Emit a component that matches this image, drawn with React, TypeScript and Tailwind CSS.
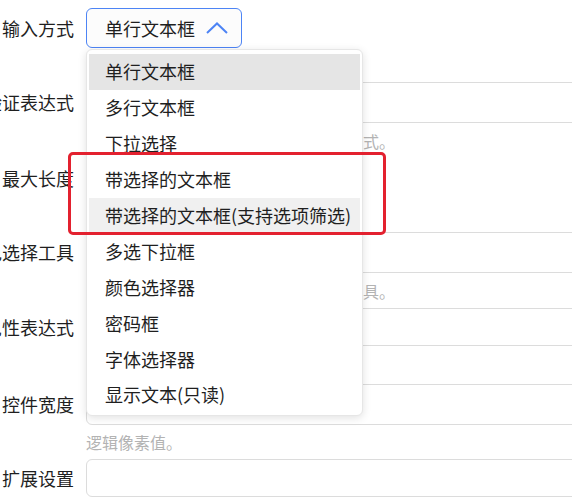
const items = [
  "单行文本框",
  "多行文本框",
  "下拉选择",
  "带选择的文本框",
  "带选择的文本框(支持选项筛选)",
  "多选下拉框",
  "颜色选择器",
  "密码框",
  "字体选择器",
  "显示文本(只读)",
];

function Label({ children }: { children: string }) {
  return (
    <div className="flex w-[74px] shrink-0 justify-end whitespace-nowrap text-[18px] text-[#1f1f1f]">
      {children}
    </div>
  );
}

function Input({ h = "h-[41px]", w = "w-[540px]" }: { h?: string; w?: string }) {
  return <div className={`${h} ${w} shrink-0 rounded-md border border-[#dcdcdc] bg-white`} />;
}

function Hint({ children }: { children: string }) {
  return (
    <div className="flex h-[35px] items-center pl-[91px] text-[16px] whitespace-nowrap text-[#b3b3b3]">
      {children}
    </div>
  );
}

export default function App() {
  return (
    <div
      className="relative h-[504px] w-[572px] overflow-hidden bg-white"
      style={{ fontFamily: '"Noto Sans CJK SC", "Noto Sans", sans-serif' }}
    >
      <div className="flex flex-col">
        <div className="mt-[8px] flex items-center gap-3">
          <Label>输入方式</Label>
          <div className="flex h-[40px] w-[156px] items-center justify-between rounded-md border border-[#4d84f5] bg-[#fcfcfc] pl-[18px] pr-[13px] text-[18px] text-[#1f1f1f]">
            <span>单行文本框</span>
            <svg width="22" height="12" viewBox="0 0 22 12" fill="none">
              <path d="M1 11 L11 1.5 L21 11" stroke="#4d84f5" strokeWidth="2" />
            </svg>
          </div>
        </div>

        <div className="mt-[34px] flex items-center gap-3">
          <Label>验证表达式</Label>
          <Input />
        </div>
        <Hint>输入时用于校验文本框内容的正则表达式。</Hint>

        <div className="flex items-center gap-3">
          <Label>最大长度</Label>
          <Input h="h-[40px]" w="w-[200px]" />
        </div>

        <div className="mt-[34px] flex items-center gap-3">
          <Label>颜色选择工具</Label>
          <Input />
        </div>
        <Hint>点击右侧按钮时打开用于选择颜色的工具。</Hint>

        <div className="flex items-center gap-3">
          <Label>可见性表达式</Label>
          <Input h="h-[38px]" />
        </div>

        <div className="mt-[38px] flex items-center gap-3">
          <Label>控件宽度</Label>
          <Input />
        </div>
        <div className="flex h-[34px] items-center pl-[86px] text-[16px] text-[#b3b3b3]">逻辑像素值。</div>

        <div className="flex items-center gap-3">
          <Label>扩展设置</Label>
          <Input h="h-[38px]" />
        </div>
      </div>

      {/* dropdown menu */}
      <div className="absolute left-[86px] top-[49px] w-[277px] rounded-md border border-[#e6e6e6] bg-white pt-[4px] pb-[2px] shadow-[0_2px_8px_rgba(0,0,0,0.12)]">
        {items.map((t, i) => (
          <div
            key={t}
            className={`mx-[2px] flex h-[35.9px] items-center pl-[16px] text-[18px] text-[#1f1f1f] ${
              i === 0 ? "bg-[#e5e5e5]" : i === 4 ? "bg-[#f0f0f0]" : ""
            }`}
          >
            {t}
          </div>
        ))}
      </div>

      {/* red annotation box */}
      <div className="absolute left-[68px] top-[152px] h-[83px] w-[318px] rounded-[5px] border-[3px] border-[#e3212f]" />
    </div>
  );
}
